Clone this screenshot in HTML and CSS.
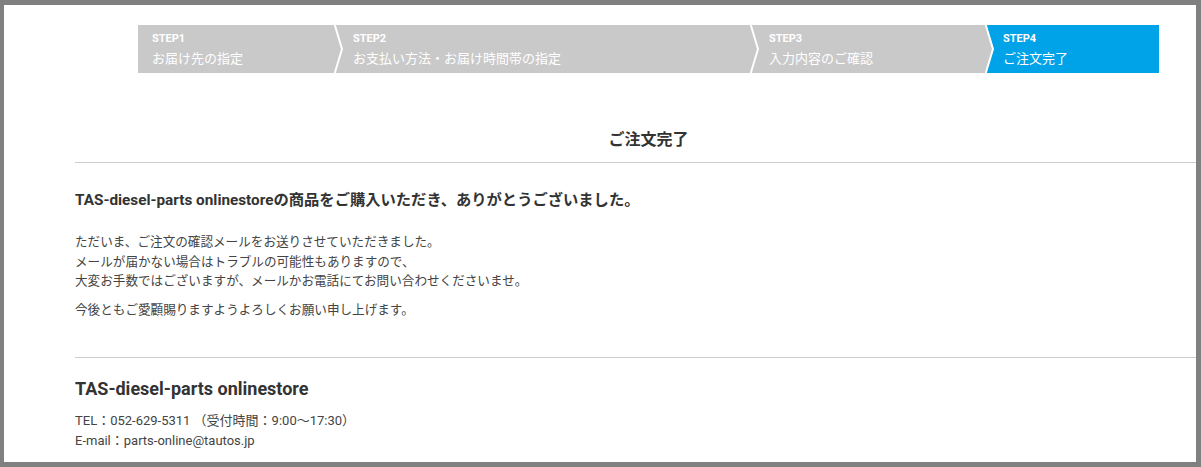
FILE: index.html
```html
<!DOCTYPE html>
<html lang="ja">
<head>
<meta charset="utf-8">
<title>ご注文完了</title>
<link rel="stylesheet" href="styles.css">
</head>
<body>
<div class="window">
  <div class="page">
    <div class="steps">
      <div class="step step-first">
        <span class="step-num">STEP1</span>
        <span class="step-label">お届け先の指定</span>
        <svg class="tip" width="11" height="48" viewBox="0 0 11 48"><polygon points="0,0 1.5,0 9,24 1.5,48 0,48" fill="#c9c9c9"/><polyline points="1.5,-1 9,24 1.5,49" fill="none" stroke="#fff" stroke-width="2"/></svg>
      </div>
      <div class="step step-2">
        <span class="step-num">STEP2</span>
        <span class="step-label">お支払い方法・お届け時間帯の指定</span>
        <svg class="tip" width="11" height="48" viewBox="0 0 11 48"><polygon points="0,0 1.5,0 9,24 1.5,48 0,48" fill="#c9c9c9"/><polyline points="1.5,-1 9,24 1.5,49" fill="none" stroke="#fff" stroke-width="2"/></svg>
      </div>
      <div class="step step-3">
        <span class="step-num">STEP3</span>
        <span class="step-label">入力内容のご確認</span>
        <svg class="tip" width="11" height="48" viewBox="0 0 11 48"><polygon points="0,0 1.5,0 9,24 1.5,48 0,48" fill="#c9c9c9"/><polyline points="1.5,-1 9,24 1.5,49" fill="none" stroke="#fff" stroke-width="2"/></svg>
      </div>
      <div class="step step-4 is-current">
        <span class="step-num">STEP4</span>
        <span class="step-label">ご注文完了</span>
      </div>
    </div>

    <h1 class="page-title">ご注文完了</h1>

    <section class="thanks">
      <h2 class="thanks-title">TAS-diesel-parts onlinestoreの商品をご購入いただき、ありがとうございました。</h2>
      <p class="thanks-text">ただいま、ご注文の確認メールをお送りさせていただきました。<br>メールが届かない場合はトラブルの可能性もありますので、<br>大変お手数ではございますが、メールかお電話にてお問い合わせくださいませ。</p>
      <p class="thanks-text thanks-text-last">今後ともご愛顧賜りますようよろしくお願い申し上げます。</p>
    </section>

    <section class="shop">
      <h2 class="shop-name">TAS-diesel-parts onlinestore</h2>
      <p class="shop-info">TEL：052-629-5311 （受付時間：9:00〜17:30）<br>E-mail：parts-online@tautos.jp</p>
    </section>
  </div>
</div>
</body>
</html>
```

FILE: styles.css
```css
* {
  box-sizing: border-box;
}

html, body {
  margin: 0;
  padding: 0;
}

body {
  background: #808080;
  padding: 5px 5px 5px 4px;
  height: 467px;
  overflow: hidden;
  font-family: Roboto, "Noto Sans CJK JP", sans-serif;
  color: #333;
}

.window {
  background: #fff;
  height: 457px;
  overflow: hidden;
}

.page {
  width: 1147px;
  margin-left: 71px;
  padding-top: 20px;
}

.steps {
  display: flex;
  width: 1021px;
  margin: 0 auto;
  height: 48px;
}

.step {
  position: relative;
  height: 48px;
  background: #c9c9c9;
  color: #fff;
  padding: 7px 0 0 20px;
  display: flex;
  flex-direction: column;
}

.step-first { width: 195px; padding-left: 14px; }
.step-2 { width: 416px; }
.step-3 { width: 235px; }
.step-4 { width: 175px; padding-left: 19px; }

.step.is-current {
  background: #00a2e8;
}

.step-num {
  font-size: 11px;
  font-weight: 700;
  line-height: 14px;
}

.step-label {
  font-size: 13px;
  line-height: 24px;
  font-family: "Noto Sans CJK JP", sans-serif;
}

.tip {
  position: absolute;
  left: 100%;
  top: 0;
  z-index: 1;
  overflow: visible;
}

.page-title {
  margin: 55px 0 0;
  padding-bottom: 10px;
  border-bottom: 1px solid #ccc;
  text-align: center;
  font-size: 16px;
  line-height: 24px;
  font-weight: 700;
  color: #333;
}

.thanks {
  padding: 26px 0 38px;
  border-bottom: 1px solid #ccc;
}

.thanks-title {
  margin: 0;
  font-size: 15.3px;
  line-height: 22px;
  font-weight: 700;
  color: #333;
}

.thanks-text {
  margin: 20px 0 0;
  font-size: 12.6px;
  line-height: 19.5px;
  color: #444;
  font-family: "Noto Sans CJK JP", sans-serif;
}

.thanks-text-last {
  margin-top: 9.5px;
}

.shop {
  padding-top: 18px;
}

.shop-name {
  margin: 0;
  font-size: 18px;
  line-height: 26px;
  font-weight: 700;
  color: #333;
}

.shop-info {
  margin: 9px 0 0;
  font-size: 13px;
  line-height: 20px;
  color: #444;
}
```
